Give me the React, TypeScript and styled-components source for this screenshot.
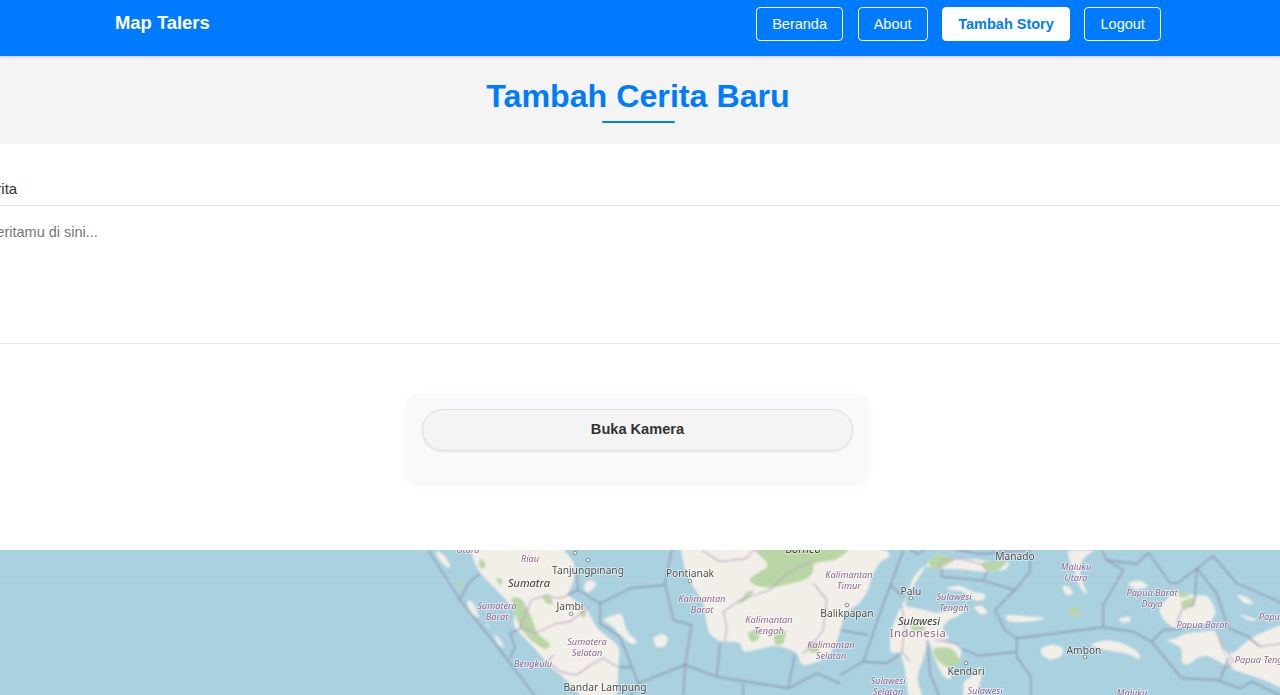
import React from "react";
import styled, { createGlobalStyle } from "styled-components";

const GlobalStyle = createGlobalStyle`
  html, body {
    margin: 0;
    padding: 0;
    height: 695px;
    overflow: hidden;
    background: #f4f4f4;
    font-family: "Liberation Sans", Arial, sans-serif;
    color: #333;
  }
`;

const NavBar = styled.header`
  position: relative;
  z-index: 2;
  display: flex;
  align-items: center;
  justify-content: space-between;
  height: 56px;
  padding: 0 119px 0 115px;
  background: #007bff;
  box-shadow: 0 1px 3px rgba(0, 0, 0, 0.18);
`;
const Brand = styled.div`
  font-size: 18.4px;
  font-weight: 700;
  color: #fff;
  margin-top: -10px;
`;
const NavLinks = styled.nav`
  display: flex;
  gap: 14.4px;
  margin-top: -9px;
`;
const NavLink = styled.a<{ $active?: boolean }>`
  display: flex;
  align-items: center;
  box-sizing: border-box;
  height: 34px;
  padding: 0 15.15px;
  border: 1px solid #fff;
  border-radius: 4px;
  font-size: 14.5px;
  font-weight: ${(p) => (p.$active ? 700 : 400)};
  color: ${(p) => (p.$active ? "#007bff" : "#fff")};
  background: ${(p) => (p.$active ? "#fff" : "transparent")};
`;

const TitleBand = styled.div`
  display: flex;
  flex-direction: column;
  align-items: center;
  box-sizing: border-box;
  height: 88px;
  padding: 21px 4px 0 0;
  background: #f4f4f4;
`;
const Title = styled.h1`
  margin: 0;
  font-size: 32.2px;
  line-height: 38px;
  font-weight: 700;
  color: #007bff;
`;
const TitleRule = styled.div`
  width: 73px;
  height: 2px;
  margin-top: 6px;
  border-radius: 2px;
  background: #007bff;
`;

const FormPanel = styled.section`
  box-sizing: border-box;
  height: 406px;
  overflow: hidden;
  background: #fff;
`;
// the form is wider than the window, so its left edge sits off screen
const FieldBlock = styled.div`
  display: flex;
  flex-direction: column;
  width: 1600px;
  margin-left: -160px;
  padding-top: 36px;
`;
const FieldLabel = styled.label`
  height: 25px;
  margin-left: 118px;
  font-size: 15px;
  line-height: 18px;
  color: #333;
`;
const StoryInput = styled.textarea`
  box-sizing: border-box;
  width: 100%;
  height: 139px;
  padding: 17px 0 0 114px;
  border: 1px solid #e2e2e2;
  outline: none;
  resize: none;
  background: #fff;
  font-family: "Liberation Sans", Arial, sans-serif;
  font-size: 14.5px;
  line-height: 18px;
  &::placeholder {
    color: #757575;
  }
`;
const CameraCard = styled.div`
  box-sizing: border-box;
  width: 461px;
  height: 89px;
  margin: 50px 0 0 407px;
  padding: 15px;
  border-radius: 12px;
  background: #f8f9fa;
  box-shadow: 0 2px 8px rgba(0, 0, 0, 0.05);
`;
const CameraButton = styled.button`
  display: block;
  box-sizing: border-box;
  width: 100%;
  height: 42px;
  padding: 0 0 2px;
  border: 1px solid #dedede;
  border-radius: 21px;
  background: #f4f4f4;
  box-shadow: 0 1px 3px rgba(0, 0, 0, 0.08);
  font-family: "Liberation Sans", Arial, sans-serif;
  font-size: 14.6px;
  font-weight: 700;
  color: #333;
`;

const MapPane = styled.div`
  height: 145px;
  overflow: hidden;
  background: #aad3df;
`;
const MapSvg = styled.svg`
  display: block;
  width: 1280px;
  height: 145px;
`;
const PlaceLabel = styled.text<{ $kind: "city" | "region" | "island" | "country" }>`
  font-family: "Noto Sans", sans-serif;
  text-anchor: middle;
  paint-order: stroke;
  stroke: rgba(255, 255, 255, 0.6);
  stroke-width: 1.6px;
  font-size: ${(p) => (p.$kind === "city" ? 10.2 : p.$kind === "country" ? 11.2 : p.$kind === "island" ? 11 : 9.2)}px;
  font-style: ${(p) => (p.$kind === "region" || p.$kind === "island" ? "italic" : "normal")};
  letter-spacing: ${(p) => (p.$kind === "country" ? 0.5 : 0)}px;
  fill: ${(p) => (p.$kind === "city" ? "#4d4d4d" : p.$kind === "island" ? "#333" : "#91658f")};
`;

// shapes are traced from 3x crops: each group is [offsetX, offsetY, points]
type Traced = [number, number, string];

const tracePoints = ([ox, oy, pts]: Traced) =>
  pts
    .trim()
    .split(/\s+/)
    .map((pair) => {
      const [x, y] = pair.split(",").map(Number);
      return [ox + x / 3, oy + y / 3 - 550];
    });

const toLine = (shape: Traced) =>
  tracePoints(shape)
    .map(([x, y]) => `${x.toFixed(1)},${y.toFixed(1)}`)
    .join(" ");

// closed outline with its corners cut a little, coasts should not look made with scissors
const toBlob = (shape: Traced) => {
  const p = tracePoints(shape);
  const along = (a: number[], b: number[], t: number) => `${(a[0] + (b[0] - a[0]) * t).toFixed(1)} ${(a[1] + (b[1] - a[1]) * t).toFixed(1)}`;
  let d = "";
  p.forEach((pt, i) => {
    const prev = p[(i + p.length - 1) % p.length];
    const next = p[(i + 1) % p.length];
    d += `${i === 0 ? "M" : "L"}${along(pt, prev, 0.3)}Q${pt[0].toFixed(1)} ${pt[1].toFixed(1)} ${along(pt, next, 0.3)}`;
  });
  return d + "Z";
};

const LAND: Traced[] = [
  // sumatra
  [400, 540, "205,0 470,0 500,40 525,70 520,130 500,165 560,205 590,265 660,320 655,380 650,490 560,490 500,420 450,380 400,320 340,260 345,210 290,150 240,100 220,60"],
  // islands off sumatra
  [400, 540, "105,30 135,45 155,85 135,80 115,55"],
  [400, 540, "200,180 220,185 240,235 220,225 205,205"],
  [400, 540, "280,280 295,290 315,325 295,315"],
  [400, 540, "255,245 270,260 265,265"],
  [400, 540, "555,125 580,120 590,135 565,160 552,150"],
  [400, 540, "605,240 640,225 665,220 680,275 715,305 695,315 660,285 635,255"],
  [400, 540, "760,290 790,280 805,295 795,322 765,320"],
  // borneo
  [640, 545, "120,-10 720,-10 730,10 650,70 650,170 625,180 612,205 600,265 565,340 485,365 470,320 405,300 310,325 300,290 240,290 205,265 190,170 150,110 130,60"],
  [840, 540, "0,30 145,30 150,50 120,65 95,110 85,150 60,190 20,215 0,225"],
  // sulawesi
  [860, 545, "205,50 230,25 290,42 350,42 400,52 450,50 440,75 370,82 300,72 230,72 190,62 160,95 140,150 135,185 175,190 225,205 290,195 325,185 300,210 265,225 245,250 270,280 240,285 205,285 190,340 170,400 190,460 145,460 135,370 120,320 90,325 90,270 105,225 125,180"],
  [860, 545, "205,285 250,285 280,295 305,315 300,345 260,345 275,375 272,405 250,395 225,345 215,310"],
  [860, 545, "310,410 335,395 360,360 365,400 345,460 310,460"],
  [860, 545, "255,130 300,120 340,142 375,145 375,165 345,168 310,140 275,135"],
  [860, 545, "340,185 365,180 385,205 360,210"],
  [860, 545, "435,208 480,212 560,218 530,228 470,232 440,228"],
  // maluku
  [860, 545, "540,310 580,297 612,310 605,335 570,345 545,330"],
  [1060, 545, "85,298 140,285 190,295 235,320 242,345 200,325 130,315"],
  [1060, 545, "20,15 110,15 80,30 60,55 60,90 85,155 60,130 45,80 30,50"],
  [1060, 545, "5,120 30,125 40,150 15,150"],
  [1060, 545, "25,190 45,190 75,210 30,212"],
  [1060, 545, "172,222 210,212 212,230 190,234"],
  // papua
  [1060, 545, "200,115 240,105 270,125 225,135"],
  [1060, 545, "295,190 345,135 400,150 445,152 470,200 450,235 380,245 340,250 310,225"],
  [1060, 545, "315,285 350,280 375,265 470,255 480,300 500,345 505,365 440,330 410,340 385,360 365,355 365,310 340,295"],
  [1060, 545, "470,255 480,300 515,330 570,280 610,262 700,225 700,445 600,400 520,375 500,345"],
  [1060, 545, "528,148 560,155 585,178 550,175"],
  [1060, 545, "530,205 600,225 570,228"],
];

const FOREST: Traced[] = [
  [640, 545, "330,5 640,5 590,45 520,55 520,85 495,105 455,115 395,130 345,122 325,105 350,85 385,65 375,45"],
  [640, 545, "290,180 320,140 345,135 320,165"],
  [640, 545, "320,265 350,250 360,280 335,295"],
  [640, 545, "400,270 440,255 430,300 405,300"],
  [640, 545, "500,300 530,290 540,320 510,325"],
  [420, 545, "270,155 305,160 335,215 350,265 395,300 375,315 330,285 295,240"],
  [420, 545, "365,150 395,155 400,180 375,175"],
  [420, 545, "480,195 500,195 495,218 482,215"],
  [420, 545, "180,40 200,55 190,75 175,60"],
  [420, 545, "225,95 250,105 240,125"],
  [420, 545, "120,105 130,105 128,135 118,130"],
  [860, 545, "205,50 230,25 290,42 240,72 212,70"],
  [860, 545, "360,50 445,50 410,80 375,75"],
  [860, 545, "220,305 280,310 305,355 260,370 225,340"],
  [860, 545, "150,240 200,245 190,260 155,258"],
  [860, 545, "625,190 650,185 660,210 630,210"],
  [1060, 545, "360,170 405,155 405,185 365,190"],
  [1060, 545, "350,135 395,150 360,160"],
  [1060, 545, "25,190 45,190 75,210 30,212"],
];

const LAND_BORDERS: Traced[] = [
  [400, 540, "395,180 440,165 470,175 500,170"],
  [400, 540, "395,180 360,260 405,280 470,250 510,245 560,205"],
  [400, 540, "460,345 445,365 480,395 530,405 580,370 610,355 650,380"],
  [400, 540, "905,30 960,65 1040,55 1060,30"],
  [400, 540, "970,215 1020,180 1110,150 1160,100 1240,60"],
  [400, 540, "970,215 980,260 975,305"],
  [400, 540, "1240,130 1280,180 1270,270 1240,310 1210,340"],
  [860, 545, "235,70 245,45 300,40 370,60 385,80"],
  [860, 545, "125,180 135,250 125,320 150,350"],
  [860, 545, "225,285 260,290 300,300"],
  [1060, 545, "405,155 400,180 365,195 350,235"],
  [1060, 545, "470,260 485,300 520,345 500,370"],
  [1060, 545, "565,280 600,305 670,295"],
];

const SEA_BORDERS: Traced[] = [
  [400, 540, "85,30 180,180 300,330 410,475"],
  [400, 540, "180,180 205,130 240,100"],
  [400, 540, "330,355 345,320 330,280 365,265"],
  [400, 540, "530,100 535,150 600,190 600,250 660,290 715,430 685,475"],
  [400, 540, "500,165 535,150"],
  [400, 540, "600,190 690,145 795,135"],
  [400, 540, "815,30 795,130 820,240 875,255 855,375 715,430"],
  [400, 540, "855,375 850,475"],
  [400, 540, "855,375 950,410 1165,445 1250,400 1320,430"],
  [400, 540, "950,410 960,310"],
  [400, 540, "1030,430 1030,475"],
  [400, 540, "1165,445 1185,340"],
  [400, 540, "655,380 695,382"],
  [840, 540, "190,30 120,220 70,365 0,405"],
  [840, 540, "150,135 190,170"],
  [840, 540, "70,365 140,370 185,340"],
  [840, 540, "0,270 85,285"],
  [840, 540, "210,30 235,42 255,30"],
  [840, 540, "350,30 420,42 560,30"],
  [840, 540, "305,85 305,110 430,122 525,150 570,95 570,30"],
  [840, 540, "430,122 440,95"],
  [840, 540, "525,150 465,210 495,270 530,295 790,262 880,275 935,305 1025,415 1130,420 1200,445 1235,425 1330,470"],
  [840, 540, "530,295 530,350 572,410 572,475"],
  [840, 540, "530,335 415,347 365,325"],
  [840, 540, "262,300 270,400 300,475"],
  [840, 540, "785,30 800,60 890,72 925,38 990,128 1015,128 1120,48 1190,130 1330,190"],
  [840, 540, "800,60 850,90 790,195 790,262"],
  [840, 540, "1070,85 1065,180"],
  [840, 540, "1070,85 1130,160 1165,265 1225,290 1262,320"],
  [840, 540, "935,305 970,270 1030,265"],
  [840, 540, "1165,355 1140,420"],
];

type Place = { text: string; x: number; y: number; kind: "city" | "region" | "island" | "country" };

const PLACES: Place[] = [
  { text: "Utara", x: 468, y: 553, kind: "region" },
  { text: "Riau", x: 530, y: 562, kind: "region" },
  { text: "Tanjungpinang", x: 588, y: 574, kind: "city" },
  { text: "Sumatra", x: 529, y: 587, kind: "island" },
  { text: "Sumatera", x: 497, y: 609, kind: "region" },
  { text: "Barat", x: 497, y: 620, kind: "region" },
  { text: "Jambi", x: 570, y: 610, kind: "city" },
  { text: "Sumatera", x: 587, y: 645, kind: "region" },
  { text: "Selatan", x: 587, y: 656, kind: "region" },
  { text: "Bengkulu", x: 533, y: 667, kind: "region" },
  { text: "Bandar Lampung", x: 605, y: 691, kind: "city" },
  { text: "Borneo", x: 803, y: 553, kind: "island" },
  { text: "Pontianak", x: 690, y: 577, kind: "city" },
  { text: "Kalimantan", x: 702, y: 602, kind: "region" },
  { text: "Barat", x: 702, y: 613, kind: "region" },
  { text: "Kalimantan", x: 769, y: 623, kind: "region" },
  { text: "Tengah", x: 769, y: 634, kind: "region" },
  { text: "Kalimantan", x: 849, y: 578, kind: "region" },
  { text: "Timur", x: 849, y: 589, kind: "region" },
  { text: "Balikpapan", x: 847, y: 617, kind: "city" },
  { text: "Kalimantan", x: 831, y: 648, kind: "region" },
  { text: "Selatan", x: 831, y: 659, kind: "region" },
  { text: "Manado", x: 1015, y: 560, kind: "city" },
  { text: "Palu", x: 911, y: 595, kind: "city" },
  { text: "Sulawesi", x: 954, y: 600, kind: "region" },
  { text: "Tengah", x: 954, y: 611, kind: "region" },
  { text: "Sulawesi", x: 919, y: 625, kind: "island" },
  { text: "Indonesia", x: 918, y: 637, kind: "country" },
  { text: "Kendari", x: 966, y: 675, kind: "city" },
  { text: "Sulawesi", x: 888, y: 684, kind: "region" },
  { text: "Selatan", x: 888, y: 695, kind: "region" },
  { text: "Sulawesi", x: 985, y: 694, kind: "region" },
  { text: "Maluku", x: 1076, y: 570, kind: "region" },
  { text: "Utara", x: 1076, y: 581, kind: "region" },
  { text: "Ambon", x: 1084, y: 654, kind: "city" },
  { text: "Papua Barat", x: 1152, y: 596, kind: "region" },
  { text: "Daya", x: 1152, y: 607, kind: "region" },
  { text: "Papua Barat", x: 1202, y: 628, kind: "region" },
  { text: "Papua", x: 1272, y: 620, kind: "region" },
  { text: "Papua Tengah", x: 1264, y: 663, kind: "region" },
  { text: "Maluku", x: 1132, y: 696, kind: "region" },
];

const DOTS = [
  [588, 560],
  [571, 614],
  [690, 581],
  [847, 605],
  [911, 598],
  [966, 663],
  [1085, 657],
  [575, 553],
];

function RegionMap() {
  return (
    <MapSvg viewBox="0 0 1280 145" aria-label="Peta">
      <defs>
        <filter id="tile-blur" x="-2%" y="-2%" width="104%" height="104%">
          <feGaussianBlur stdDeviation="0.85" />
        </filter>
        <filter id="label-blur" x="-2%" y="-2%" width="104%" height="104%">
          <feGaussianBlur stdDeviation="0.35" />
        </filter>
      </defs>
      <rect width="1280" height="145" fill="#aad1df" />
      <g filter="url(#tile-blur)">
        <rect x="0" y="30" width="1280" height="1" fill="#fff" opacity="0.12" />
        {LAND.map((shape, i) => (
          <path key={i} d={toBlob(shape)} fill="#f2efe9" />
        ))}
        {FOREST.map((shape, i) => (
          <path key={i} d={toBlob(shape)} fill="#b9d6a6" />
        ))}
        {SEA_BORDERS.map((shape, i) => (
          <polyline key={i} points={toLine(shape)} fill="none" stroke="#8f98b6" strokeWidth="1.4" strokeLinejoin="round" />
        ))}
        {LAND_BORDERS.map((shape, i) => (
          <polyline key={i} points={toLine(shape)} fill="none" stroke="#bda3c2" strokeWidth="1.2" strokeLinejoin="round" />
        ))}
      </g>
      <g filter="url(#label-blur)">
        {DOTS.map(([x, y], i) => (
          <circle key={i} cx={x} cy={y - 550} r="1.8" fill="#fff" stroke="#666" strokeWidth="0.7" />
        ))}
        {PLACES.map((place, i) => (
          <PlaceLabel key={i} x={place.x} y={place.y - 550} $kind={place.kind}>
            {place.text}
          </PlaceLabel>
        ))}
      </g>
    </MapSvg>
  );
}

export default function App() {
  return (
    <>
      <GlobalStyle />
      <NavBar>
        <Brand>Map Talers</Brand>
        <NavLinks>
          <NavLink>Beranda</NavLink>
          <NavLink>About</NavLink>
          <NavLink $active>Tambah Story</NavLink>
          <NavLink>Logout</NavLink>
        </NavLinks>
      </NavBar>
      <TitleBand>
        <Title>Tambah Cerita Baru</Title>
        <TitleRule />
      </TitleBand>
      <FormPanel>
        <FieldBlock>
          <FieldLabel>Isi Cerita</FieldLabel>
          <StoryInput placeholder="Tulis ceritamu di sini..." />
        </FieldBlock>
        <CameraCard>
          <CameraButton>Buka Kamera</CameraButton>
        </CameraCard>
      </FormPanel>
      <MapPane>
        <RegionMap />
      </MapPane>
    </>
  );
}
